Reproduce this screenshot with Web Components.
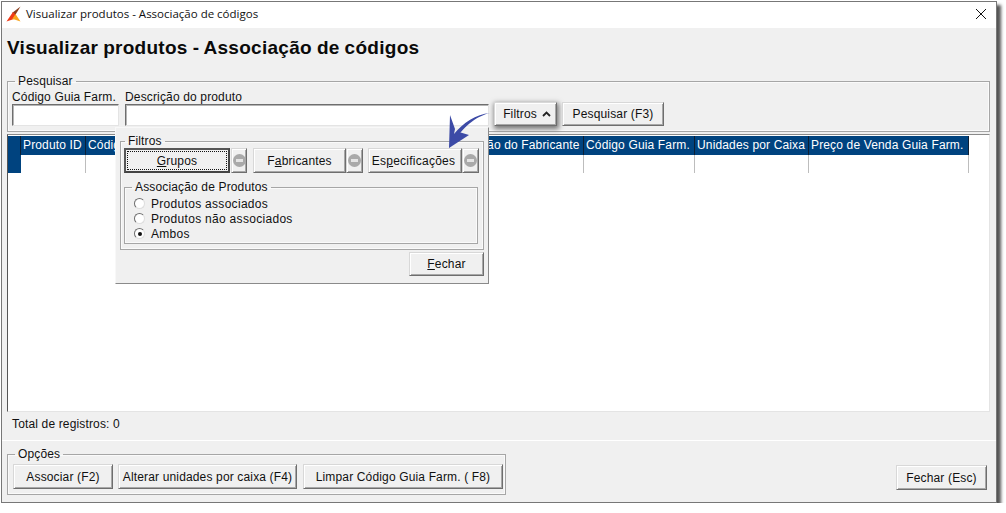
<!DOCTYPE html>
<html lang="pt">
<head>
<meta charset="utf-8">
<title>Visualizar produtos</title>
<style>
html, body { margin: 0; padding: 0; background: #fff; }
body { font: 12px "Liberation Sans", Arial, sans-serif; color: #111; letter-spacing: .15px; }
</style>
</head>
<body>
<x-window caption="Visualizar produtos - Associação de códigos">
  <x-heading>Visualizar produtos - Associação de códigos</x-heading>

  <x-search-bar></x-search-bar>
  <x-grid></x-grid>
  <x-status>Total de registros: 0</x-status>

  <x-footer>
    <x-group legend="Opções" slot="left" style="--group-pad: 3px 2px 5px 5px; --legend-left: 2px; --group-gap: 5px">
      <x-button style="width: 100px">Associar (F2)</x-button>
      <x-button style="width: 179px">Alterar unidades por caixa (F4)</x-button>
      <x-button style="width: 200px; margin-left: 1px">Limpar Código Guia Farm. ( F8)</x-button>
    </x-group>
    <x-button slot="right" style="width: 91px">Fechar (Esc)</x-button>
  </x-footer>

  <x-filter-popup slot="overlay"></x-filter-popup>
  <x-arrow slot="overlay"></x-arrow>
</x-window>

<script>
class XWindow extends HTMLElement {
  constructor() {
    super();
    this.attachShadow({ mode: "open" });
    this.shadowRoot.innerHTML = `
      <style>
        :host { display: flex; flex-direction: column; box-sizing: border-box; position: relative;
          width: 996px; height: 502px; margin: 1px 0 0 1px; background: #f0f0f0;
          border: 1px solid #777; box-shadow: 4px 4px 3px #555; }
        .bar { display: flex; align-items: center; height: 26px; flex: none; background: #fff; padding: 0 0 3px 4px; box-sizing: border-box;
          font: 11.5px "Open Sans", "Liberation Sans", sans-serif; letter-spacing: 0; color: #111; }
        .bar svg.logo { margin-right: 4px; }
        .bar span { flex: 1; }
        .bar svg.close { margin-right: 9px; }
        .main { flex: 1; display: flex; flex-direction: column; min-height: 0; padding: 0 5px 0 5px; }
      </style>
      <div class="bar">
        <svg class="logo" width="16" height="16" viewBox="0 0 16 16">
          <path d="M14.5 0.5 L6 7 L9 9.5 Z" fill="#8a3d1c"/>
          <path d="M7 6 L0.5 15.5 L6.5 13.5 L10 9 Z" fill="#f03a17"/>
          <path d="M6 13.5 L9.5 8 L14.5 15.5 L8.5 13.5 Z" fill="#f9a51d"/>
        </svg>
        <span></span>
        <svg class="close" width="12" height="12" viewBox="0 0 12 12">
          <path d="M1 1 L11 11 M11 1 L1 11" stroke="#111" stroke-width="1" fill="none"/>
        </svg>
      </div>
      <div class="main"><slot></slot></div>
      <slot name="overlay"></slot>`;
    this.shadowRoot.querySelector("span").textContent = this.getAttribute("caption");
  }
}

class XHeading extends HTMLElement {
  constructor() {
    super();
    this.attachShadow({ mode: "open" });
    this.shadowRoot.innerHTML = `
      <style>
        :host { display: block; height: 46px; padding-top: 9px; box-sizing: border-box; flex: none; white-space: nowrap;
          font: bold 19px/22px "Liberation Sans", sans-serif; letter-spacing: .28px; word-spacing: -.6px; color: #0a0a0a; }
      </style>
      <slot></slot>`;
  }
}

class XGroup extends HTMLElement {
  constructor() {
    super();
    this.attachShadow({ mode: "open" });
    this.shadowRoot.innerHTML = `
      <style>
        :host { display: block; box-sizing: border-box; }
        fieldset { margin: 0; height: 100%; box-sizing: border-box; min-width: 0; border: 1px solid #a6a6a6;
          box-shadow: 0 0 0 1px #fafafa inset; padding: var(--group-pad, 0 4px 4px 4px); }
        legend { padding: 0 3px; margin-left: var(--legend-left, 4px); line-height: 14px; }
        .row { display: flex; gap: var(--group-gap, 0); flex-direction: var(--group-dir, row); }
      </style>
      <fieldset><legend></legend><div class="row"><slot></slot></div></fieldset>`;
    this.shadowRoot.querySelector("legend").textContent = this.getAttribute("legend");
  }
}

class XButton extends HTMLElement {
  constructor() {
    super();
    this.attachShadow({ mode: "open" });
    this.shadowRoot.innerHTML = `
      <style>
        :host { display: flex; align-items: center; justify-content: center; box-sizing: border-box; flex: none;
          height: 25px; background: #f0f0f0; color: #111; white-space: nowrap; position: relative;
          border: 1px solid; border-color: #d8d8d8 #6e6e6e #6e6e6e #d8d8d8;
          box-shadow: inset 1px 1px 0 #fff, inset -1px -1px 0 #a8a8a8; }
        :host([default]) { border: 2px solid; border-color: #555 #444 #444 #555; box-shadow: none; }
        :host([default]) .focus { outline: 1px dotted #111; outline-offset: 0; }
        :host([raised]) { box-shadow: inset 1px 1px 0 #fff, inset -1px -1px 0 #a8a8a8, 1px 2px 5px 1px #777; }
        .focus { display: flex; align-items: center; justify-content: center; position: absolute; inset: 2px; }
      </style>
      <div class="focus"><slot></slot></div>`;
  }
}

class XMinus extends HTMLElement {
  constructor() {
    super();
    this.attachShadow({ mode: "open" });
    this.shadowRoot.innerHTML = `
      <style>
        :host { display: flex; align-items: center; justify-content: center; box-sizing: border-box; flex: none;
          height: 25px; width: 16px; background: #f0f0f0;
          border: 1px solid; border-color: #d8d8d8 #6e6e6e #6e6e6e #d8d8d8;
          box-shadow: inset 1px 1px 0 #fff, inset -1px -1px 0 #a8a8a8; }
        i { display: block; width: 13px; height: 13px; border-radius: 50%; background: #a9a9a9; position: relative; }
        i::after { content: ""; position: absolute; left: 3px; right: 3px; top: 5px; height: 3px; background: #e4e4e4; }
      </style>
      <i></i>`;
  }
}

class XField extends HTMLElement {
  constructor() {
    super();
    this.attachShadow({ mode: "open" });
    this.shadowRoot.innerHTML = `
      <style>
        :host { display: flex; flex-direction: column; flex: none; }
        label { line-height: 14px; height: 14px; white-space: nowrap; }
        div { height: 22px; background: #fff; box-sizing: border-box;
          border: 1px solid; border-color: #6e6e6e #e4e4e4 #e4e4e4 #6e6e6e;
          box-shadow: inset 1px 1px 0 #b5b5b5; }
      </style>
      <label></label><div></div>`;
    this.shadowRoot.querySelector("label").textContent = this.getAttribute("label");
  }
}

class XSearchBar extends HTMLElement {
  constructor() {
    super();
    this.attachShadow({ mode: "open" });
    this.shadowRoot.innerHTML = `
      <style>
        :host { display: block; flex: none; height: 58px; margin-right: 1px; }
        x-group { height: 100%; --group-pad: 2px 4px 0 4px; --legend-left: 3px; --group-gap: 6px; }
        .btns { display: flex; gap: 5px; align-self: flex-end; margin-left: -1px; }
        x-button { height: 24px; }
        svg { margin-left: 5px; }
        .filtros { padding-left: 3px; box-sizing: border-box; display: inline-flex; align-items: center; }
      </style>
      <x-group legend="Pesquisar">
        <x-field label="Código Guia Farm." style="width: 107px"></x-field>
        <x-field label="Descrição do produto" style="width: 364px"></x-field>
        <div class="btns">
          <x-button raised style="width: 63px"><span class="filtros">Filtros<svg width="9" height="6" viewBox="0 0 9 6"><path d="M1 5 L4.5 1.5 L8 5" fill="none" stroke="#222" stroke-width="1.8"/></svg></span></x-button>
          <x-button style="width: 102px">Pesquisar (F3)</x-button>
        </div>
      </x-group>`;
  }
}

class XGrid extends HTMLElement {
  constructor() {
    super();
    this.attachShadow({ mode: "open" });
    const cols = [
      ["", 13], ["Produto ID", 65], ["Código", 120], ["Descrição", 238],
      ["Descrição do Fabricante", 140], ["Código Guia Farm.", 111],
      ["Unidades por Caixa", 114], ["Preço de Venda Guia Farm.", 160]
    ];
    const head = cols.map(c => `<div class="th" style="width:${c[1]}px">${c[0]}</div>`).join("");
    const body = cols.map((c, i) => `<div class="td${i ? "" : " mark"}" style="width:${c[1]}px"></div>`).join("");
    this.shadowRoot.innerHTML = `
      <style>
        :host { display: block; flex: 1; min-height: 0; margin: 2px 1px 0 0; background: #fff; box-sizing: border-box;
          border: 1px solid; border-color: #8a8a8a #e4e4e4 #e4e4e4 #555; box-shadow: inset 0 1px 0 #fff; padding-top: 1px; overflow: hidden; }
        .row { display: flex; }
        .row > div { box-sizing: border-box; flex: none; }
        .th { height: 19px; background: #00437f; color: #fff; line-height: 19px; padding-left: 2px; white-space: nowrap;
          overflow: hidden; border-right: 1px solid #0d1f33; }
        .td { height: 18px; border-right: 1px solid #bdbdbd; }
        .mark { background: #00437f; border-right-color: #00437f; }
      </style>
      <div class="row">${head}</div>
      <div class="row">${body}</div>`;
  }
}

class XStatus extends HTMLElement {
  constructor() {
    super();
    this.attachShadow({ mode: "open" });
    this.shadowRoot.innerHTML = `
      <style>
        :host { display: flex; align-items: center; flex: none; height: 28px; padding: 0 0 4px 5px; box-sizing: border-box; }
      </style>
      <slot></slot>`;
  }
}

class XFooter extends HTMLElement {
  constructor() {
    super();
    this.attachShadow({ mode: "open" });
    this.shadowRoot.innerHTML = `
      <style>
        :host { display: flex; flex: none; justify-content: space-between; align-items: flex-end; height: 62px;
          margin: 0 -5px; padding: 0 9px 7px 5px; box-sizing: border-box; border-top: 1px solid #fff; }
        ::slotted([slot="right"]) { margin-bottom: 5px; }
      </style>
      <slot name="left"></slot><slot name="right"></slot>`;
  }
}

class XRadio extends HTMLElement {
  constructor() {
    super();
    this.attachShadow({ mode: "open" });
    this.shadowRoot.innerHTML = `
      <style>
        :host { display: flex; align-items: center; height: 15px; letter-spacing: .3px; }
        i { width: 11px; height: 11px; border-radius: 50%; box-sizing: border-box; background: #fff; margin-right: 6px;
          border: 1px solid; border-color: #6e6e6e #ddd #ddd #6e6e6e; display: flex; align-items: center; justify-content: center; }
        :host([checked]) i::after { content: ""; width: 4px; height: 4px; border-radius: 50%; background: #111; }
      </style>
      <i></i><slot></slot>`;
  }
}

class XFilterPopup extends HTMLElement {
  constructor() {
    super();
    this.attachShadow({ mode: "open" });
    this.shadowRoot.innerHTML = `
      <style>
        :host { position: absolute; left: 113px; top: 125px; width: 374px; height: 157px; box-sizing: border-box;
          display: flex; flex-direction: column; background: #f0f0f0; padding: 6px 4px 5px 4px;
          border: 1px solid; border-color: #f8f8f8 #8a8a8a #8a8a8a #f8f8f8; }
        .filters { height: 116px; flex: none; --group-pad: 0 5px 4px 3px; --group-dir: column; --legend-left: 1px; --group-gap: 7px; }
        .line { display: flex; }
        .assoc { --group-pad: 2px 4px 2px 9px; --group-dir: column; --legend-left: -2px; --group-gap: 0; }
        .foot { display: flex; justify-content: flex-end; margin-top: 2px; }
        .esp { letter-spacing: .25px; margin-right: 3px; }
      </style>
      <x-group class="filters" legend="Filtros">
        <div class="line">
          <x-button default style="width: 106px"><span><u>G</u>rupos</span></x-button>
          <x-minus style="margin-left: 1px"></x-minus>
          <x-button style="width: 93px; margin-left: 6px"><span>F<u>a</u>bricantes</span></x-button>
          <x-minus style="width: 17px"></x-minus>
          <x-button style="width: 94px; margin-left: 5px"><span class="esp">Es<u>p</u>ecificações</span></x-button>
          <x-minus style="width: 17px"></x-minus>
        </div>
        <x-group class="assoc" legend="Associação de Produtos" style="width: 354px">
          <x-radio>Produtos associados</x-radio>
          <x-radio>Produtos não associados</x-radio>
          <x-radio checked>Ambos</x-radio>
        </x-group>
      </x-group>
      <div class="foot"><x-button style="width: 75px; height: 24px"><span><u>F</u>echar</span></x-button></div>`;
  }
}

class XArrow extends HTMLElement {
  constructor() {
    super();
    this.attachShadow({ mode: "open" });
    this.shadowRoot.innerHTML = `
      <style>
        :host { position: absolute; left: 440px; top: 102px; width: 60px; height: 52px; pointer-events: none; }
        svg { display: block; filter: blur(.6px); }
      </style>
      <svg width="60" height="52" viewBox="0 0 60 52">
        <path d="M48 9 C36 12 24 19 11 39 L7 44 L8 11 L13 25 L12 30 C21 19 34 10 48 9 Z" fill="#3c4aa6"/>
        <path d="M7 44 L27 31 L17 28 L10 33 Z" fill="#3c4aa6"/>
      </svg>`;
  }
}

customElements.define("x-window", XWindow);
customElements.define("x-heading", XHeading);
customElements.define("x-group", XGroup);
customElements.define("x-button", XButton);
customElements.define("x-minus", XMinus);
customElements.define("x-field", XField);
customElements.define("x-search-bar", XSearchBar);
customElements.define("x-grid", XGrid);
customElements.define("x-status", XStatus);
customElements.define("x-footer", XFooter);
customElements.define("x-radio", XRadio);
customElements.define("x-filter-popup", XFilterPopup);
customElements.define("x-arrow", XArrow);
</script>
</body>
</html>
